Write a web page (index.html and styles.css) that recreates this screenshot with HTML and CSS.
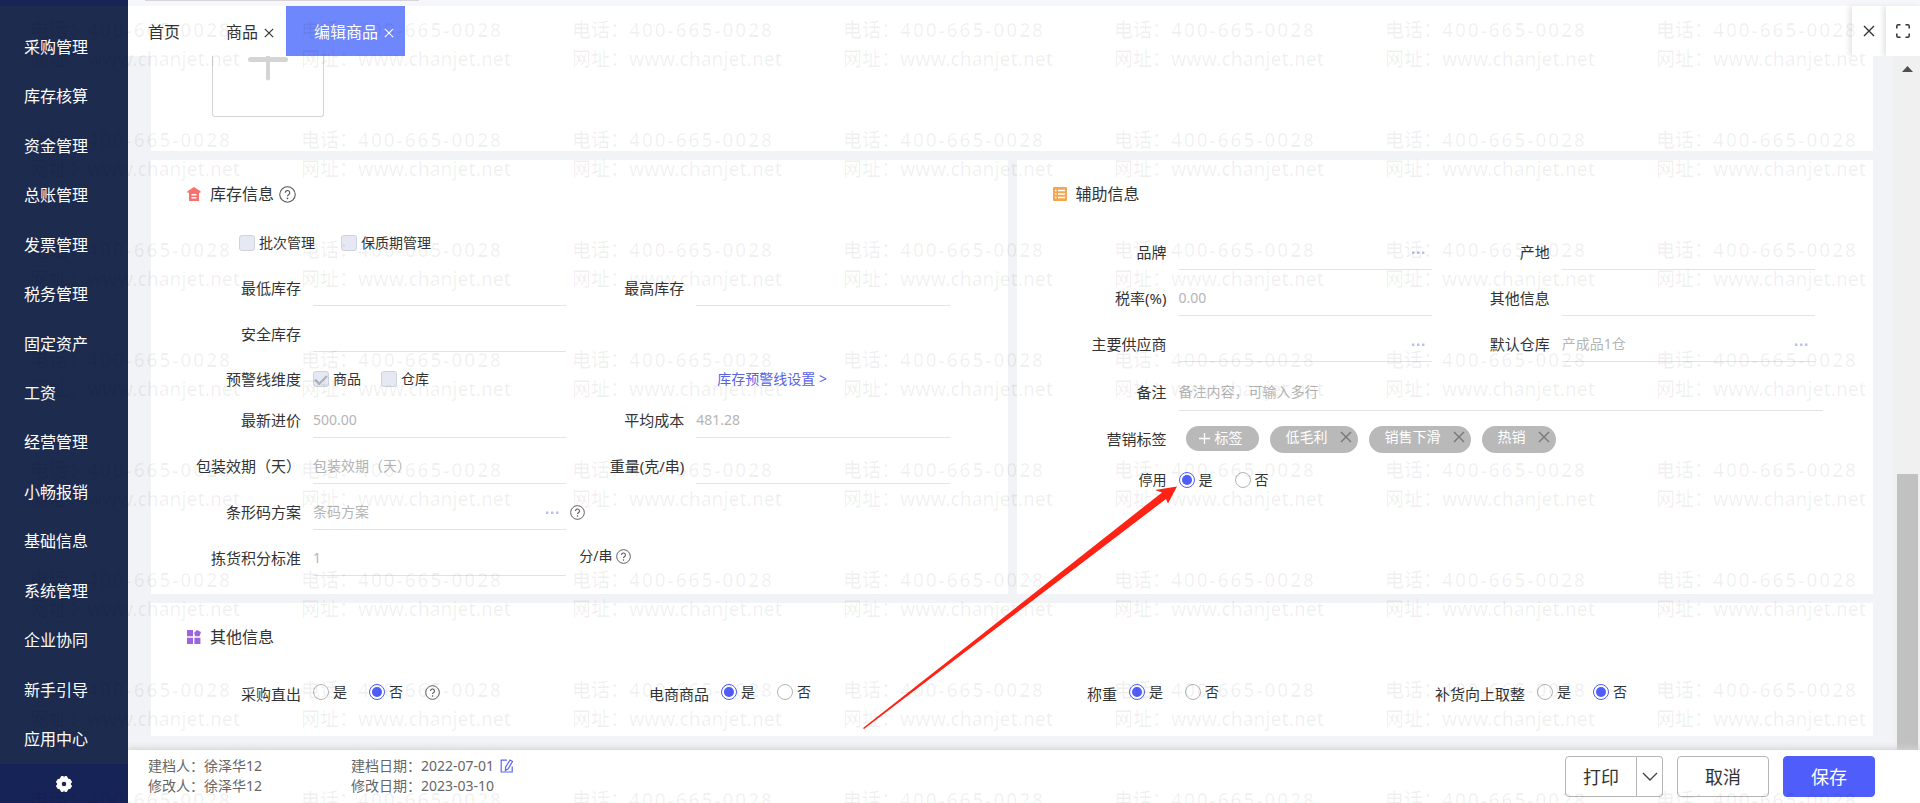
FILE: index.html
```html
<!DOCTYPE html>
<html lang="zh-CN">
<head>
<meta charset="utf-8">
<title>编辑商品</title>
<link rel="stylesheet" href="styles.css">
</head>
<body>
<svg class="defs" aria-hidden="true">
  <symbol id="help" viewBox="0 0 16 16"><circle cx="8" cy="8" r="7.3" fill="none" stroke="currentColor"/><path d="M5.9 6.4a2.1 2.1 0 1 1 3.1 1.8c-.7.4-1 .7-1 1.5" fill="none" stroke="currentColor" stroke-width="1.1"/><circle cx="8" cy="11.6" r=".8" fill="currentColor"/></symbol>
  <symbol id="cross" viewBox="0 0 12 12"><path d="M1 1l10 10M11 1L1 11" fill="none" stroke="currentColor" stroke-width="1.4"/></symbol>
  <symbol id="dots" viewBox="0 0 14 4"><path d="M1 .5h2.4v2.4H1zM6 .5h2.4v2.4H6zM11 .5h2.4v2.4H11z" fill="currentColor"/></symbol>
</svg>
<div class="app">
  <aside class="sidebar">
    <nav class="menu">
      <a href="#">采购管理</a><a href="#">库存核算</a><a href="#">资金管理</a><a href="#">总账管理</a><a href="#">发票管理</a><a href="#">税务管理</a><a href="#">固定资产</a><a href="#">工资</a><a href="#">经营管理</a><a href="#">小畅报销</a><a href="#">基础信息</a><a href="#">系统管理</a><a href="#">企业协同</a><a href="#">新手引导</a><a href="#">应用中心</a>
    </nav>
    <button class="settings" aria-label="设置"><svg width="18" height="18" viewBox="0 0 18 18"><path fill="#fff" fill-rule="evenodd" stroke="#fff" stroke-linejoin="round" d="M6.300 1.500h1.800l.9.900.9-.9h1.800l.9 2.500 2.600.6 1.300 2.400-1.300 2 1.300 2-1.300 2.400-2.600.6-.9 2.500H9.900l-.9-.9-.9.900H6.300l-.9-2.500-2.600-.6L1.500 11l1.300-2-1.300-2 1.300-2.400 2.600-.6zM9 6.200a2.800 2.800 0 1 0 0 5.600 2.800 2.800 0 0 0 0-5.600z"/></svg></button>
  </aside>
  <main class="main">
    <div class="strip"><div class="strip-line"></div></div>
    <header class="tabs">
      <a class="tab tab-home" href="#">首页</a>
      <div class="tab tab-goods"><a href="#">商品</a><button class="close" aria-label="关闭商品"><svg width="10" height="10"><use href="#cross"/></svg></button></div>
      <div class="tab tab-active"><a href="#">编辑商品</a><button class="close" aria-label="关闭编辑商品"><svg width="10" height="10"><use href="#cross"/></svg></button></div>
      <div class="window-tools">
        <button aria-label="关闭"><svg width="12" height="12"><use href="#cross"/></svg></button>
        <button aria-label="全屏"><svg width="14" height="14" viewBox="0 0 14 14" fill="none" stroke="currentColor" stroke-width="1.500"><path d="M.8 4.500V2.300Q.8.8 2.300.8h2.200M9.500.8h2.200q1.500 0 1.500 1.500v2.200M13.200 9.500v2.200q0 1.500-1.500 1.500H9.500M4.500 13.200H2.300q-1.500 0-1.500-1.500V9.500"/></svg></button>
      </div>
    </header>
    <div class="body">
      <div class="cards">
        <section class="card card-image">
          <button class="upload" aria-label="上传图片"><svg width="40" height="25" viewBox="0 0 40 25" stroke="#d4d4d4" stroke-linecap="round"><path d="M2.500 3.500h35" stroke-width="5"/><path d="M20 0v22.500" stroke-width="4"/></svg></button>
        </section>
        <div class="pair">
          <section class="card">
            <h2 class="title"><svg width="14" height="14" viewBox="0 0 14 14"><path fill="#f8716c" fill-rule="evenodd" d="M7 0l6.500 4.200v1.600H12V14H2V5.800H.5V4.200zM4.500 7v1.500h5V7zm0 3v1.600h5V10z"/></svg>库存信息<svg class="help" width="17" height="17"><use href="#help"/></svg></h2>
            <div class="checks">
              <label class="choice"><input type="checkbox" disabled>批次管理</label>
              <label class="choice"><input type="checkbox" disabled>保质期管理</label>
            </div>
            <div class="fields">
              <div class="field"><label for="min">最低库存</label><input id="min" type="text"></div>
              <div class="field"><label for="max">最高库存</label><input id="max" type="text"></div>
              <div class="field"><label for="safe">安全库存</label><input id="safe" type="text"></div>
              <div></div>
              <div class="field short"><span class="name">预警线维度</span><div class="options">
                <label class="choice"><input type="checkbox" checked disabled>商品</label>
                <label class="choice"><input type="checkbox" disabled>仓库</label></div></div>
              <div class="linkcell"><a href="#">库存预警线设置 &gt;</a></div>
              <div class="field"><label for="price">最新进价</label><input id="price" type="text" placeholder="500.00"></div>
              <div class="field"><label for="cost">平均成本</label><input id="cost" type="text" placeholder="481.28"></div>
              <div class="field"><label for="pack">包装效期（天）</label><input id="pack" type="text" placeholder="包装效期（天）"></div>
              <div class="field"><label for="weight">重量(克/串)</label><input id="weight" type="text"></div>
              <div class="field"><label for="bar">条形码方案</label><div class="pick"><input id="bar" type="text" placeholder="条码方案"><button aria-label="选择条码方案"><svg width="14" height="4"><use href="#dots"/></svg></button></div></div>
              <div class="after"><svg class="help" width="15" height="15"><use href="#help"/></svg></div>
              <div class="field"><label for="score">拣货积分标准</label><input id="score" type="text" placeholder="1"></div>
              <div class="after unit">分/串<svg class="help" width="15" height="15"><use href="#help"/></svg></div>
            </div>
          </section>
          <section class="card">
            <h2 class="title"><svg width="14" height="14" viewBox="0 0 14 14"><rect width="14" height="14" rx="1" fill="#f5a74f"/><path d="M2 3.500h1.500M5 3.500h7M2 7h1.500M5 7h7M2 10.500h1.500M5 10.500h7" stroke="#fff" stroke-width="1.300"/></svg>辅助信息</h2>
            <div class="fields aux">
              <div class="field"><label for="brand">品牌</label><div class="pick"><input id="brand" type="text"><button aria-label="选择品牌"><svg width="14" height="4"><use href="#dots"/></svg></button></div></div>
              <div class="field"><label for="origin">产地</label><input id="origin" type="text"></div>
              <div class="field"><label for="tax">税率(%)</label><input id="tax" type="text" placeholder="0.00"></div>
              <div class="field"><label for="other">其他信息</label><input id="other" type="text"></div>
              <div class="field"><label for="supplier">主要供应商</label><div class="pick"><input id="supplier" type="text"><button aria-label="选择供应商"><svg width="14" height="4"><use href="#dots"/></svg></button></div></div>
              <div class="field"><label for="depot">默认仓库</label><div class="pick"><input id="depot" type="text" placeholder="产成品1仓"><button aria-label="选择仓库"><svg width="14" height="4"><use href="#dots"/></svg></button></div></div>
            </div>
            <div class="field remark"><label for="note">备注</label><input id="note" type="text" placeholder="备注内容，可输入多行"></div>
            <div class="field tagrow"><span class="name">营销标签</span><div class="tags">
              <button class="tag tag-add"><svg width="11" height="11" viewBox="0 0 11 11" stroke="#fff" stroke-width="1.300"><path d="M5.500 0v11M0 5.500h11"/></svg>标签</button>
              <span class="tag">低毛利<button aria-label="移除低毛利"><svg width="12" height="12"><use href="#cross"/></svg></button></span>
              <span class="tag">销售下滑<button aria-label="移除销售下滑"><svg width="12" height="12"><use href="#cross"/></svg></button></span>
              <span class="tag">热销<button aria-label="移除热销"><svg width="12" height="12"><use href="#cross"/></svg></button></span>
            </div></div>
            <div class="field stoprow"><span class="name">停用</span><div class="options">
              <label class="choice"><input type="radio" name="stop" checked>是</label>
              <label class="choice"><input type="radio" name="stop">否</label></div></div>
          </section>
        </div>
        <section class="card card-other">
          <h2 class="title"><svg width="14" height="14" viewBox="0 0 14 14" fill="#9d65dc"><path d="M0 0h6v6.300H0zM0 7.700h6V14H0zM7.400 7.700h6V14h-6zM9.800 0l4.200 2-1.500 4.200-4.500.1-.8-3.500z"/></svg>其他信息</h2>
          <div class="switches">
            <div class="field"><span class="name">采购直出</span><div class="options">
              <label class="choice"><input type="radio" name="direct">是</label>
              <label class="choice"><input type="radio" name="direct" checked>否</label><svg class="help" width="15" height="15"><use href="#help"/></svg></div></div>
            <div class="field"><span class="name">电商商品</span><div class="options">
              <label class="choice"><input type="radio" name="shop" checked>是</label>
              <label class="choice"><input type="radio" name="shop">否</label></div></div>
            <div class="field"><span class="name">称重</span><div class="options">
              <label class="choice"><input type="radio" name="weigh" checked>是</label>
              <label class="choice"><input type="radio" name="weigh">否</label></div></div>
            <div class="field"><span class="name">补货向上取整</span><div class="options">
              <label class="choice"><input type="radio" name="round">是</label>
              <label class="choice"><input type="radio" name="round" checked>否</label></div></div>
          </div>
        </section>
      </div>
      <div class="scrollbar"><svg width="11" height="6" viewBox="0 0 11 6"><path d="M0 6L5.500 0 11 6z" fill="#505050"/></svg><div class="thumb"></div></div>
    </div>
    <footer class="footer">
      <div class="meta"><span>建档人：徐泽华12</span><span>修改人：徐泽华12</span></div>
      <div class="meta"><span>建档日期：2022-07-01<button class="edit" aria-label="编辑"><svg width="14" height="14" viewBox="0 0 14 14" fill="none" stroke="currentColor" stroke-width="1.200"><path d="M7 1.200H1.200v11.800h11V7.500M10 1l2.500 1.500-4.500 7.500-2.600 1.400.2-3.100z"/></svg></button></span><span>修改日期：2023-03-10</span></div>
      <div class="actions">
        <div class="split"><button>打印</button><button class="drop" aria-label="更多打印选项"><svg width="16" height="9" viewBox="0 0 16 9"><path d="M1 1l7 7 7-7" fill="none" stroke="#444" stroke-width="1.400"/></svg></button></div>
        <button class="btn">取消</button>
        <button class="btn primary">保存</button>
      </div>
    </footer>
  </main>
</div>
<div class="watermark" aria-hidden="true"></div>
<svg class="pointer" width="316" height="244" viewBox="0 0 316 244" aria-hidden="true"><path d="M0 243L299 7.500 292 5 314 1.500 305 18.500 303 14 1 244z" fill="#fe2314"/></svg>
<script src="script.js"></script>
</body>
</html>
```
FILE: script.js
```js
// Fill the overlay with repeated contact lines.
const layer = document.querySelector('.watermark');
const cols = Math.floor(window.innerWidth / 271);
const rows = Math.ceil(window.innerHeight / 110);
for (let i = 0; i < cols * rows; i++) {
  const mark = document.createElement('div');
  mark.className = 'mark';
  mark.innerHTML = '<div>电话：<span class="phone">400-665-0028</span></div><div>网址：www.chanjet.net</div>';
  layer.append(mark);
}
layer.style.gridTemplateColumns = `repeat(${cols}, 271px)`;
```
FILE: styles.css
```css
* { box-sizing: border-box; }
body { margin: 0; font: 14px/20px "Noto Sans", "Noto Sans CJK SC", sans-serif; color: #333; overflow: hidden; }
a { color: inherit; text-decoration: none; }
button { font: inherit; color: inherit; background: none; border: 0; padding: 0; display: flex; align-items: center; justify-content: center; }
.defs { display: none; }
.app { display: flex; height: 100vh; }

.sidebar { flex: 0 0 128px; position: relative; z-index: 1; display: flex; flex-direction: column; background: #1d2b4f; border-top: 6px solid #172454; }
.menu { flex: 1; display: flex; flex-direction: column; padding-top: 16px; }
.menu a { flex: 1; display: flex; align-items: center; padding-left: 24px; font-size: 16px; color: #fff; }
.settings { height: 39px; background: #162357; }

.main { flex: 1; min-width: 0; display: flex; flex-direction: column; }
.strip { height: 6px; background: #f6f7fd; padding-left: 17px; }
.strip-line { width: 274px; height: 1px; background: #d8d4da; }
.tabs { height: 50px; display: flex; background: #fff; font-size: 16px; line-height: 24px; padding-left: 20px; }
.tab { display: flex; align-items: center; gap: 6px; padding-top: 2px; }
.tab-home { width: 78px; }
.tab-goods { width: 60px; }
.tab-active { background: #6e87fc; color: #fff; padding-left: 28px; padding-right: 11px; }
.close { padding-top: 2px; }
.window-tools { margin-left: auto; display: flex; }
.window-tools button { width: 34px; box-shadow: -3px 0 5px #e6e6e6; background: #fff; }

.body { flex: 1; min-height: 0; display: flex; background: #f2f3f6; }
.cards { flex: 1; min-width: 0; padding: 0 21px 0 23px; display: flex; flex-direction: column; gap: 9px; }
.card { background: #fff; min-width: 0; padding: 0 50px 0 32px; }
.card-image { height: 95px; padding-left: 61px; }
.upload { width: 112px; height: 61px; border: 1px solid #d4d4d4; border-top: 0; border-radius: 0 0 3px 3px; align-items: flex-start; }
.pair { display: grid; grid-template-columns: 1fr 1fr; gap: 9px; min-height: 434px; }
.card-other { height: 133px; }
.title { margin: 0; padding: 22px 0 0 4px; display: flex; align-items: center; gap: 9px; font-size: 16px; font-weight: 400; line-height: 24px; }
.title .help { margin-left: -4px; }
.help { color: #555; flex: none; }
.checks { display: flex; gap: 26px; padding: 26px 0 6px 56px; }
.fields { display: grid; grid-template-columns: 1fr 1fr; padding-right: 8px; }
.aux { padding-top: 18px; }
.field { display: flex; align-items: flex-end; gap: 12px; height: 46px; }
.field > label, .name { flex: 0 0 118px; text-align: right; font-size: 15px; line-height: 36px; white-space: nowrap; }
input[type="text"] { flex: 1; min-width: 0; width: 100%; height: 34px; border: 0; border-bottom: 1px solid #e3e3e3; background: none; padding: 0 0 2px; font: inherit; outline: 0; }
input::placeholder { color: #b5b5b5; opacity: 1; }
.pick { flex: 1; min-width: 0; display: flex; border-bottom: 1px solid #e3e3e3; padding-right: 7px; }
.pick input[type="text"] { height: 33px; border: 0; }
.pick button { width: 14px; color: #b9bdf8; }
.choice { display: flex; align-items: center; gap: 4px; line-height: 22px; white-space: nowrap; }
.choice input { appearance: none; flex: none; margin: 0; width: 16px; height: 16px; border: 1px solid #b5b5b5; display: grid; place-content: center; background: #fff; }
.choice input[type="checkbox"] { border-color: #d0d3dc; border-radius: 3px; background: #e6e9f3; }
.choice input[type="checkbox"]:checked::after { content: ""; width: 10px; height: 5px; border: solid #adb0bb; border-width: 0 0 2px 2px; transform: translateY(-1px) rotate(-45deg); }
.choice input[type="radio"] { border-radius: 50%; }
.choice input[type="radio"]:checked { border-color: #4f5dfb; }
.choice input[type="radio"]:checked::after { content: ""; width: 10px; height: 10px; border-radius: 50%; background: #4f5dfb; }
.options { display: flex; align-items: center; gap: 22px; height: 34px; }
.short { height: 40px; align-items: center; padding-top: 14px; }
.short .options { gap: 20px; }
.short .name { line-height: 24px; }
.linkcell { padding: 17px 0 0 151px; color: #5a62e6; white-space: nowrap; }
.after { display: flex; align-items: center; gap: 4px; padding: 10px 0 0 4px; }
.unit { padding: 6px 0 0 13px; }
.remark { height: 49px; }
.remark > label { line-height: 38px; }
.remark input[type="text"] { padding-bottom: 4px; }
.tagrow { height: 46px; align-items: center; padding-top: 10px; }
.tags { display: flex; align-items: flex-start; gap: 11px; padding-left: 7px; }
.tag { display: flex; align-items: center; gap: 12px; height: 27px; padding: 0 6px 4px 16px; border-radius: 14px; background: #b9b9b9; color: #fff; white-space: nowrap; }
.tag button { color: #777; }
.tag-add { height: 25px; gap: 5px; padding: 0 16px 0 13px; }
.stoprow { height: 46px; align-items: center; }
.stoprow .name { font-size: 14px; }
.switches { display: grid; grid-template-columns: repeat(4, 1fr); padding-right: 8px; }
.card-other .field { height: 63px; align-items: flex-end; }
.card-other .options { height: 40px; }

.scrollbar { flex: 0 0 26px; background: #f0f0f0; display: flex; flex-direction: column; align-items: center; justify-content: space-between; padding-top: 10px; }
.thumb { width: 21px; height: 276px; background: #c1c1c1; }

.footer { height: 53px; display: flex; align-items: center; background: #fff; padding: 0 45px 0 20px; box-shadow: 0 -2px 6px #d4d4d4; color: #666; position: relative; }
.meta { width: 203px; display: flex; flex-direction: column; white-space: nowrap; padding-bottom: 2px; }
.meta span { display: flex; align-items: center; }
.edit { color: #5a66f0; margin-left: 6px; }
.actions { margin-left: auto; display: flex; gap: 14px; font-size: 18px; color: #333; }
.actions button { height: 41px; border: 1px solid #b5b5b5; border-radius: 4px; background: #fff; }
.split { display: flex; }
.split button { width: 72px; border-radius: 4px 0 0 4px; }
.split .drop { width: 26px; border-left: 0; border-radius: 0 4px 4px 0; }
.actions .btn { width: 92px; }
.actions .primary { background: #4f5dfb; border-color: #4f5dfb; color: #fff; }

.watermark { position: absolute; inset: 0; z-index: 2; overflow: hidden; pointer-events: none; display: grid; grid-auto-rows: 110px; padding: 16px 0 0 30px; color: rgba(0, 0, 0, .06); font-size: 19px; font-weight: 500; line-height: 29px; white-space: nowrap; }
.phone { letter-spacing: 2px; }
.pointer { position: absolute; z-index: 3; left: 863px; top: 485px; pointer-events: none; }
```
